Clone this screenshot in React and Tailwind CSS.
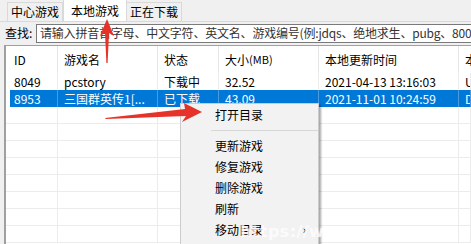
import React from 'react';

const cols = 'grid grid-cols-[52px_100px_61px_100px_140px_1fr]';

const rows = [
  ['8049', 'pcstory', '下载中', '32.52', '2021-04-13 13:16:03', 'U'],
  ['8953', '三国群英传1[...', '已下载', '43.09', '2021-11-01 10:24:59', 'D'],
];

function Cell({ children, sel, first }) {
  let cls = 'border-[#ececec] pl-[6px]';
  if (sel) cls = 'border-[#4a9be0] bg-[#0078d7] text-white pl-[6px]';
  if (first) cls = sel ? 'border-[#4a9be0] border-l-[4px] border-l-white bg-[#0078d7] text-white pl-[4px]' : 'border-[#ececec] pl-[8px]';
  return (
    <div className={`h-[17px] overflow-hidden whitespace-nowrap border-r leading-[17px] ${cls}`}>
      {children}
    </div>
  );
}

export default function App() {
  return (
    <div className="relative h-[244px] w-[471px] overflow-hidden bg-[#f0f0f0] font-['Noto_Sans_CJK_SC',sans-serif] text-[12px] text-black">
      {/* tabs */}
      <div className="flex h-[22px] items-end border-b border-[#d9d9d9] pl-[7px]">
        <div className="flex h-[19px] w-[56px] items-center justify-center border border-b-0 border-[#d9d9d9] bg-[#f0f0f0]">
          中心游戏
        </div>
        <div className="flex h-[22px] w-[64px] items-center justify-center border border-b-0 border-[#d9d9d9] bg-white">
          本地游戏
        </div>
        <div className="flex h-[19px] w-[55px] items-center justify-center border border-b-0 border-l-0 border-[#d9d9d9] bg-[#f0f0f0]">
          正在下载
        </div>
      </div>

      {/* search */}
      <div className="flex h-[22px] items-center pl-[5px]">
        <span className="w-[31px]">查找:</span>
        <div className="flex h-[19px] flex-1 items-center overflow-hidden whitespace-nowrap border border-r-0 border-[#7a7a7a] bg-white pl-[3px] tracking-[-0.2px] text-[#333]">
          请输入拼音首字母、中文字符、英文名、游戏编号(例:jdqs、绝地求生、pubg、8000
        </div>
      </div>

      {/* table */}
      <div className="ml-[4px] mt-px h-[200px] border-l-2 border-t border-[#a0a0a0] bg-white">
        <div className={`${cols} h-[27px] items-center`}>
          {['ID', '游戏名', '状态', '大小(MB)', '本地更新时间', '本'].map((h, i) => (
            <div
              key={h}
              className={`flex h-full items-center whitespace-nowrap border-r border-[#e5e5e5] ${
                i === 0 ? 'pl-[8px]' : 'pl-[6px]'
              }`}
            >
              {h === '大小(MB)' ? (
                <>
                  大小<span className="text-[11px]">(MB)</span>
                </>
              ) : (
                h
              )}
            </div>
          ))}
        </div>
        {rows.map((r, ri) => (
          <div key={r[0]} className={cols}>
            {r.map((c, i) => (
              <Cell key={i} sel={ri === 1} first={i === 0}>
                {c}
              </Cell>
            ))}
          </div>
        ))}
        {Array.from({ length: 8 }).map((_, i) => (
          <div key={i} className={`${cols} border-b border-[#ececec]`}>
            {Array.from({ length: 6 }).map((__, j) => (
              <div key={j} className="h-[16px] border-r border-[#ececec]" />
            ))}
          </div>
        ))}
      </div>

      {/* context menu */}
      <div className="absolute left-[180px] top-[103px] w-[139px] border border-[#cccccc] bg-[#f2f2f2] pb-[20px] shadow-[2px_2px_2px_rgba(0,0,0,0.35)]">
        <div className="flex h-[21px] items-center pl-[34px]">打开目录</div>
        <div className="flex h-[10px] items-center pl-[30px]">
          <div className="h-px w-full bg-[#d7d7d7]" />
        </div>
        {['更新游戏', '修复游戏', '删除游戏', '刷新'].map((t) => (
          <div key={t} className="flex h-[21px] items-center pl-[34px]">
            {t}
          </div>
        ))}
        <div className="flex h-[21px] items-center justify-between pl-[34px] pr-[12px]">
          <span>移动目录</span>
          <span className="text-[11px]">›</span>
        </div>
      </div>

      {/* watermark */}
      <div className="pointer-events-none absolute left-[240px] top-[220px] font-['DejaVu_Sans',sans-serif] text-[16px] font-bold tracking-wide text-white/75">
        https://www
      </div>

      {/* red arrows */}
      <svg className="pointer-events-none absolute inset-0" width="471" height="244">
        <polygon points="107,19 114,36 109,33 107.6,63 106.4,63 105,33 100,36" fill="#e5332a" />
        <polygon points="202,112 182,122 186,116 106,119 105,118 185,109 184,103" fill="#e5332a" />
      </svg>
    </div>
  );
}
